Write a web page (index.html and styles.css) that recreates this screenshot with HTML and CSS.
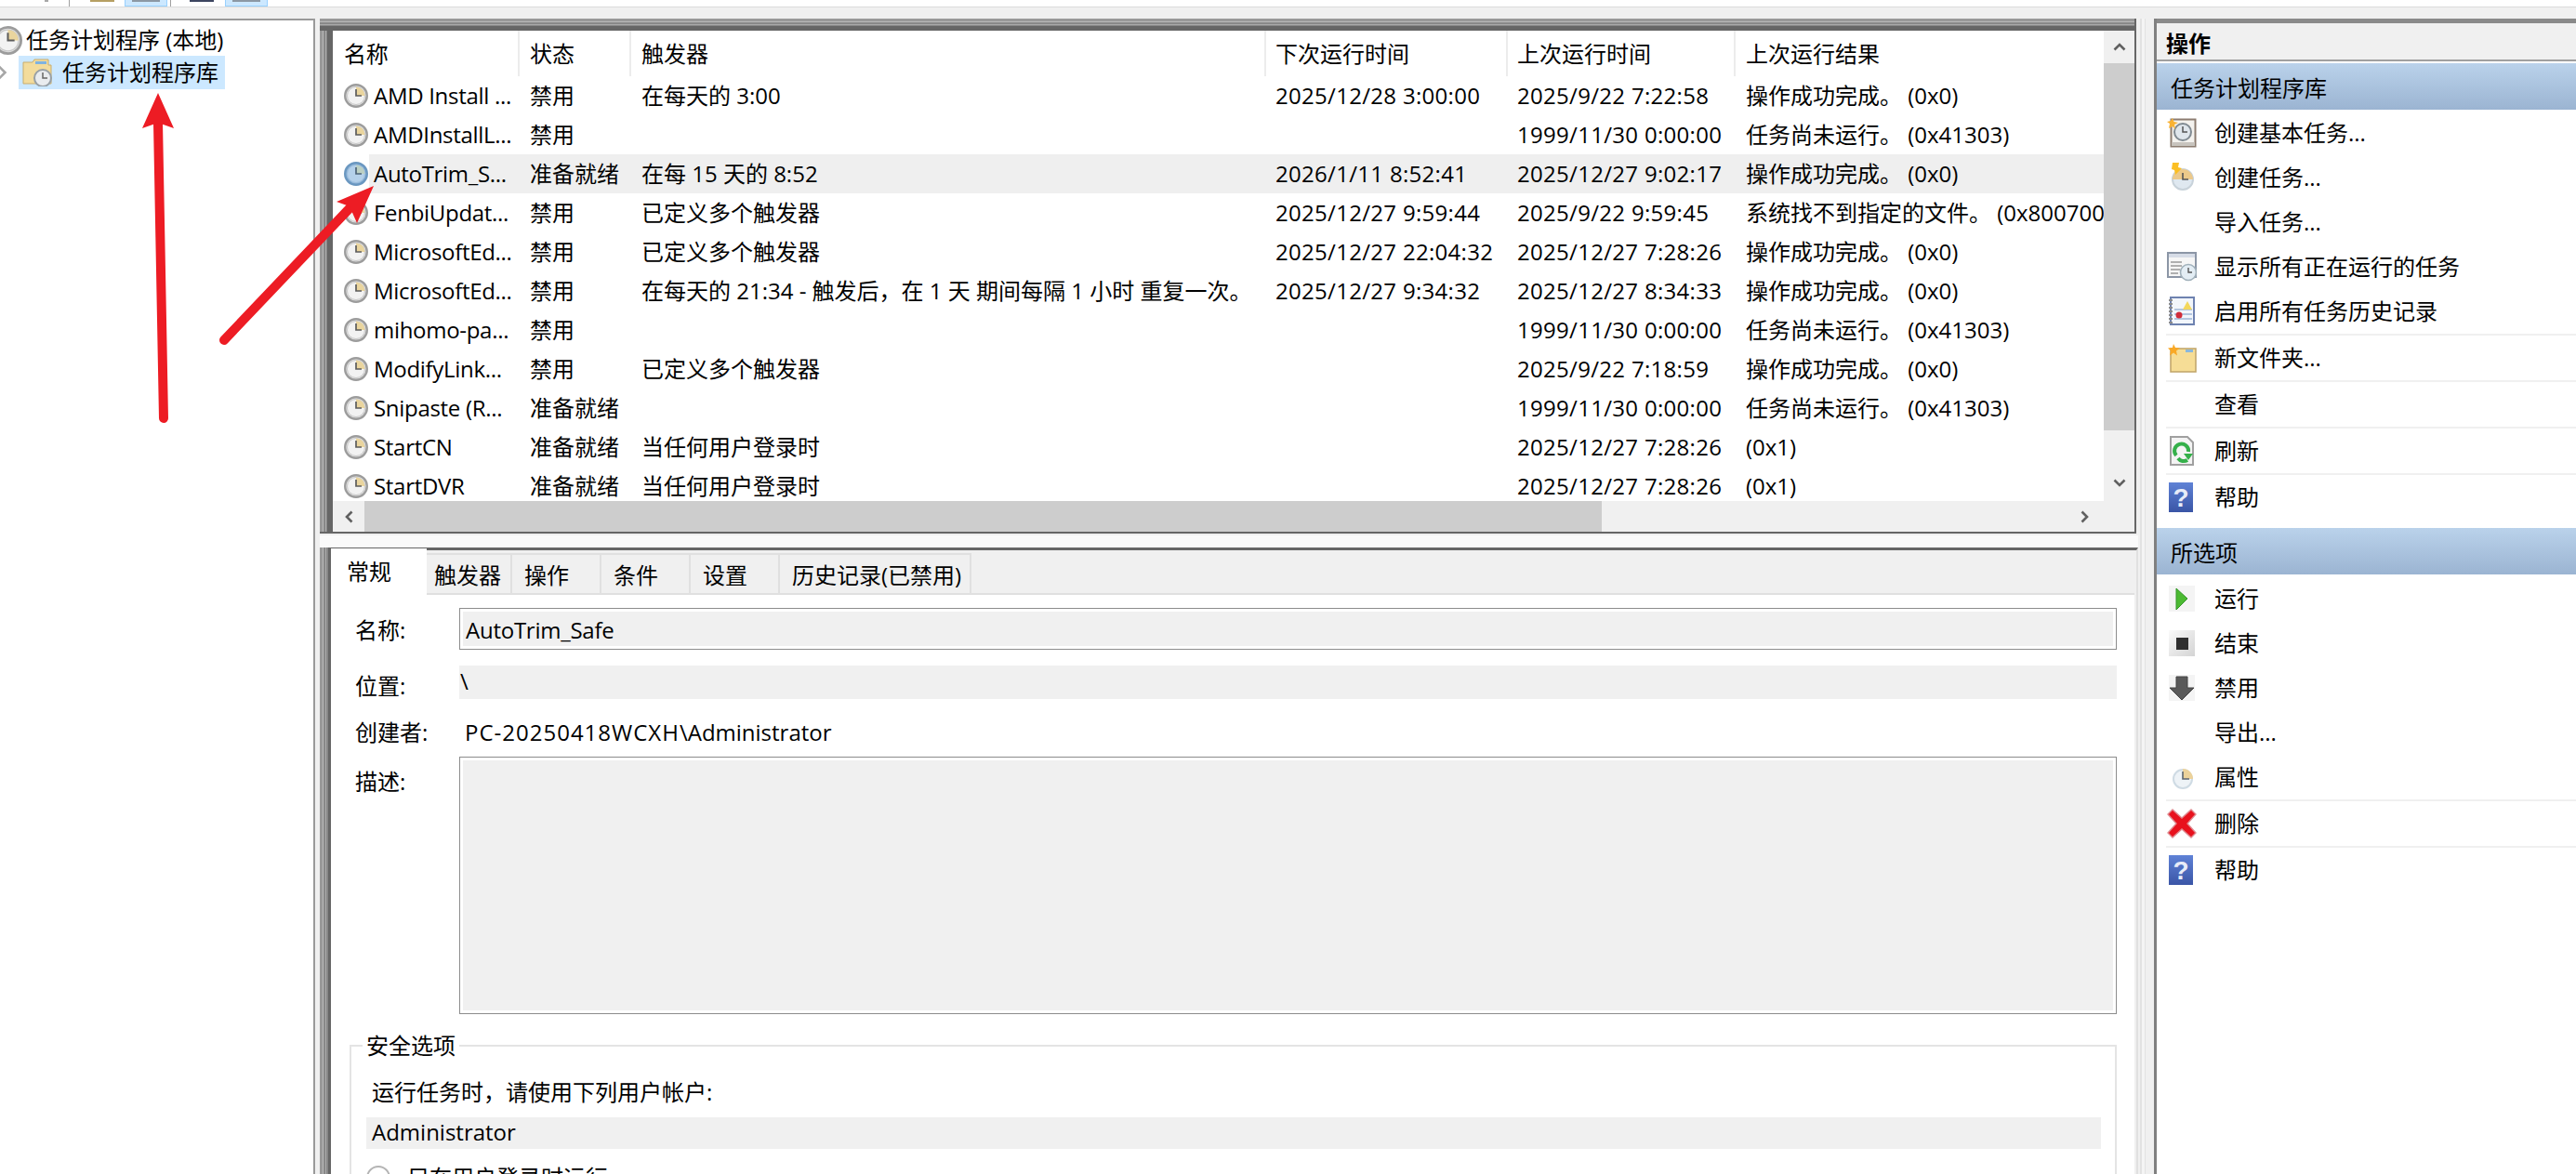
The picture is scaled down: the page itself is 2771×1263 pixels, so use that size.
FILE: index.html
```html
<!DOCTYPE html>
<html lang="zh-CN">
<head>
<meta charset="utf-8">
<title>任务计划程序</title>
<link rel="stylesheet" href="styles.css">
</head>
<body>
<svg class="defs" width="0" height="0" aria-hidden="true">
  <symbol id="clock" viewBox="0 0 26 26">
    <circle cx="13" cy="13" r="11.8" fill="#e4e4e4" stroke="#9c9c9c" stroke-width="2.4"/>
    <circle cx="13" cy="13" r="9.5" fill="#f2f2f2" stroke="#c8c8c8"/>
    <path d="M13 13V3.5A9.5 9.5 0 0 1 22.5 13Z" fill="#ead59e"/>
    <path d="M13 6v7h6" fill="none" stroke="#5c5c5c" stroke-width="1.7"/>
  </symbol>
  <symbol id="clock-blue" viewBox="0 0 26 26">
    <circle cx="13" cy="13" r="11.8" fill="#8fb4d8" stroke="#6a97c0" stroke-width="2.4"/>
    <circle cx="13" cy="13" r="9.5" fill="#b4d0ea" stroke="#9cbddc"/>
    <path d="M13 13V3.5A9.5 9.5 0 0 1 22.5 13Z" fill="#bcd0c4"/>
    <path d="M13 6v7h6" fill="none" stroke="#4d6478" stroke-width="1.7"/>
  </symbol>
  <linearGradient id="helpbg" x1="0" y1="0" x2="0" y2="1"><stop offset="0" stop-color="#5f82d6"/><stop offset="1" stop-color="#3a55a6"/></linearGradient>
</svg>

<div class="toolbar">
  <span class="tb-bit tb-grey"></span>
  <span class="tb-sep tb-sep-a"></span>
  <span class="tb-bit tb-gold"></span>
  <span class="tb-btn tb-btn-a"><i></i></span>
  <span class="tb-sep tb-sep-b"></span>
  <span class="tb-bit tb-dark"></span>
  <span class="tb-btn tb-btn-b"><i></i></span>
</div>

<div class="layout">
  <aside class="tree">
    <div class="tree-row">
      <svg class="tree-clock" viewBox="0 0 26 26"><use href="#clock"/></svg>
      <span>任务计划程序 (本地)</span>
    </div>
    <div class="tree-row tree-row-sub">
      <svg class="tree-chev" viewBox="0 0 10 16"><path d="M1 1.5 7.5 8 1 14.5" fill="none" stroke="#a6a6a6" stroke-width="2.6"/></svg>
      <div class="tree-sel">
        <svg class="tree-folder" viewBox="0 0 32 30">
          <path d="M1 4h10l2-3h15v6h3v20H1Z" fill="#f3dc9c" stroke="#c9ad6c"/>
          <rect x="14" y="3" width="12" height="3" fill="#7fb3e0"/>
          <circle cx="22" cy="21" r="9" fill="#e9ecef" stroke="#98a0a6" stroke-width="2"/>
          <path d="M22 15v6h5" fill="none" stroke="#666" stroke-width="1.5"/>
        </svg>
        <span>任务计划程序库</span>
      </div>
    </div>
  </aside>

  <main class="center">
    <section class="frame">
      <div class="list-top">
        <div class="table">
          <div class="row head">
            <div class="c1">名称</div><div class="c2">状态</div><div class="c3">触发器</div><div class="c4">下次运行时间</div><div class="c5">上次运行时间</div><div class="c6">上次运行结果</div>
          </div>
          <div class="row">
            <div class="c1"><svg class="clk"><use href="#clock"/></svg>AMD Install ...</div><div class="c2">禁用</div><div class="c3">在每天的 3:00</div><div class="c4 num">2025/12/28 3:00:00</div><div class="c5 num">2025/9/22 7:22:58</div><div class="c6">操作成功完成。 (0x0)</div>
          </div>
          <div class="row">
            <div class="c1"><svg class="clk"><use href="#clock"/></svg>AMDInstallL...</div><div class="c2">禁用</div><div class="c3"></div><div class="c4 num"></div><div class="c5 num">1999/11/30 0:00:00</div><div class="c6">任务尚未运行。 (0x41303)</div>
          </div>
          <div class="row sel">
            <div class="c1"><svg class="clk"><use href="#clock-blue"/></svg>AutoTrim_S...</div><div class="c2">准备就绪</div><div class="c3">在每 15 天的 8:52</div><div class="c4 num">2026/1/11 8:52:41</div><div class="c5 num">2025/12/27 9:02:17</div><div class="c6">操作成功完成。 (0x0)</div>
          </div>
          <div class="row">
            <div class="c1"><svg class="clk"><use href="#clock"/></svg>FenbiUpdat...</div><div class="c2">禁用</div><div class="c3">已定义多个触发器</div><div class="c4 num">2025/12/27 9:59:44</div><div class="c5 num">2025/9/22 9:59:45</div><div class="c6">系统找不到指定的文件。 (0x80070002)</div>
          </div>
          <div class="row">
            <div class="c1"><svg class="clk"><use href="#clock"/></svg>MicrosoftEd...</div><div class="c2">禁用</div><div class="c3">已定义多个触发器</div><div class="c4 num">2025/12/27 22:04:32</div><div class="c5 num">2025/12/27 7:28:26</div><div class="c6">操作成功完成。 (0x0)</div>
          </div>
          <div class="row">
            <div class="c1"><svg class="clk"><use href="#clock"/></svg>MicrosoftEd...</div><div class="c2">禁用</div><div class="c3">在每天的 21:34 - 触发后，在 1 天 期间每隔 1 小时 重复一次。</div><div class="c4 num">2025/12/27 9:34:32</div><div class="c5 num">2025/12/27 8:34:33</div><div class="c6">操作成功完成。 (0x0)</div>
          </div>
          <div class="row">
            <div class="c1"><svg class="clk"><use href="#clock"/></svg>mihomo-pa...</div><div class="c2">禁用</div><div class="c3"></div><div class="c4 num"></div><div class="c5 num">1999/11/30 0:00:00</div><div class="c6">任务尚未运行。 (0x41303)</div>
          </div>
          <div class="row">
            <div class="c1"><svg class="clk"><use href="#clock"/></svg>ModifyLink...</div><div class="c2">禁用</div><div class="c3">已定义多个触发器</div><div class="c4 num"></div><div class="c5 num">2025/9/22 7:18:59</div><div class="c6">操作成功完成。 (0x0)</div>
          </div>
          <div class="row">
            <div class="c1"><svg class="clk"><use href="#clock"/></svg>Snipaste (R...</div><div class="c2">准备就绪</div><div class="c3"></div><div class="c4 num"></div><div class="c5 num">1999/11/30 0:00:00</div><div class="c6">任务尚未运行。 (0x41303)</div>
          </div>
          <div class="row">
            <div class="c1"><svg class="clk"><use href="#clock"/></svg>StartCN</div><div class="c2">准备就绪</div><div class="c3">当任何用户登录时</div><div class="c4 num"></div><div class="c5 num">2025/12/27 7:28:26</div><div class="c6">(0x1)</div>
          </div>
          <div class="row">
            <div class="c1"><svg class="clk"><use href="#clock"/></svg>StartDVR</div><div class="c2">准备就绪</div><div class="c3">当任何用户登录时</div><div class="c4 num"></div><div class="c5 num">2025/12/27 7:28:26</div><div class="c6">(0x1)</div>
          </div>
        </div>
        <div class="vscroll">
          <div class="sb-btn"><svg class="chev-v" viewBox="0 0 14 9"><path d="M1.5 7.5 7 2l5.5 5.5" /></svg></div>
          <div class="sb-vthumb"></div>
          <div class="sb-rest"><svg class="chev-v" viewBox="0 0 14 9"><path d="M1.5 1.5 7 7l5.5-5.5" /></svg></div>
        </div>
      </div>
      <div class="hscroll">
        <div class="sb-hbtn"><svg class="chev-h" viewBox="0 0 9 14"><path d="M7.5 1.5 2 7l5.5 5.5" /></svg></div>
        <div class="sb-hthumb"></div>
        <div class="sb-hrest"><svg class="chev-h" viewBox="0 0 9 14"><path d="M1.5 1.5 7 7l-5.5 5.5" /></svg></div>
      </div>
    </section>

    <div class="split-h"></div>

    <section class="lower">
      <div class="lower-stripes"></div>
      <div class="lower-main">
        <nav class="tabs">
          <div class="tab active t-a">常规</div>
          <div class="tab t-b">触发器</div>
          <div class="tab t-c">操作</div>
          <div class="tab t-c">条件</div>
          <div class="tab t-c">设置</div>
          <div class="tab t-d">历史记录(已禁用)</div>
        </nav>
        <div class="tab-body">
          <div class="f-row f-name">
            <label class="f-label">名称:</label>
            <div class="f-box"><span>AutoTrim_Safe</span></div>
          </div>
          <div class="f-row f-loc">
            <label class="f-label">位置:</label>
            <div class="f-flat">\</div>
          </div>
          <div class="f-row f-author">
            <label class="f-label">创建者:</label>
            <div class="f-plain"><span class="host">PC-20250418WCXH</span>\Administrator</div>
          </div>
          <div class="f-row f-desc">
            <label class="f-label">描述:</label>
            <div class="f-box"></div>
          </div>
          <fieldset class="group">
            <legend>安全选项</legend>
            <p class="g-line">运行任务时，请使用下列用户帐户:</p>
            <div class="g-user">Administrator</div>
            <div class="g-radio"><span class="radio"></span>只在用户登录时运行</div>
          </fieldset>
        </div>
      </div>
    </section>
  </main>

  <div class="split-v"></div>

  <aside class="actions">
    <div class="act-head">操作</div>
    <div class="act-title">任务计划程序库</div>
    <div class="act-rows">
      <div class="act-row">
        <svg class="ico" viewBox="0 0 32 32">
          <rect x="4.5" y="1.5" width="26" height="29" fill="#f4f2ee" stroke="#8c7c70" stroke-width="2"/>
          <rect x="5" y="26" width="25" height="4" fill="#c8c4be"/>
          <circle cx="17" cy="15" r="9" fill="#dfe6ec" stroke="#808a92" stroke-width="2"/>
          <path d="M17 9v6h5" fill="none" stroke="#555" stroke-width="1.5"/>
          <path d="M6 0l1.5 4L12 5 8 7l1 5-3-3-4 2 1-5-3-2 4-1Z" fill="#f9b233"/>
        </svg>
        <span>创建基本任务...</span>
      </div>
      <div class="act-row">
        <svg class="ico" viewBox="0 0 32 32">
          <circle cx="17" cy="18" r="11" fill="#dfe8f0" stroke="#c8d2da" stroke-width="2"/>
          <path d="M17 18V7a11 11 0 0 1 11 11Z" fill="#ecc98a"/>
          <path d="M6 18a11 11 0 0 1 11-11v11Z" fill="#ecc98a"/>
          <path d="M17 11v7h6" fill="none" stroke="#555" stroke-width="1.6"/>
          <path d="M6 0h7l-1 5 4 1-7 7-1-5-3-1Z" fill="#fbbf24"/>
        </svg>
        <span>创建任务...</span>
      </div>
      <div class="act-row">
        <span class="ico"></span>
        <span>导入任务...</span>
      </div>
      <div class="act-row">
        <svg class="ico" viewBox="0 0 32 32">
          <rect x="1" y="1" width="30" height="26" fill="#f6f6f6" stroke="#8c96a6" stroke-width="2"/>
          <rect x="2" y="2" width="28" height="4" fill="#d6dce6"/>
          <path d="M4 11h12M4 15h12M4 19h10M4 23h8" stroke="#b0b0b0" stroke-width="2"/>
          <circle cx="23" cy="22" r="8.5" fill="#e3edf4" stroke="#a0b0ba" stroke-width="1.6"/>
          <path d="M23 17v5h4" fill="none" stroke="#555" stroke-width="1.4"/>
        </svg>
        <span>显示所有正在运行的任务</span>
      </div>
      <div class="act-row">
        <svg class="ico" viewBox="0 0 32 32">
          <rect x="4" y="1" width="25" height="29" fill="#f2f6fb" stroke="#6e82b0" stroke-width="2"/>
          <path d="M2 4h4M2 8h4M2 12h4M2 16h4M2 20h4M2 24h4M2 28h4" stroke="#8c8c8c" stroke-width="2"/>
          <path d="M8 14h19M8 19h19M8 24h19" stroke="#9fb7d8" stroke-width="1.6"/>
          <path d="M22 5l5 9H17Z" fill="#f3d75c"/>
          <circle cx="13" cy="20" r="3.5" fill="#d12d3a"/>
        </svg>
        <span>启用所有任务历史记录</span>
      </div>
      <div class="act-sep"></div>
      <div class="act-row">
        <svg class="ico" viewBox="0 0 32 32">
          <path d="M4 6h27v25H4Z" fill="#f6dd96" stroke="#c0a468" stroke-width="1.5"/>
          <rect x="20" y="7" width="8" height="3" fill="#8ab8dc"/>
          <path d="M7 1l2 4 5 .5-4 3 1 5-4-3-4 3 1-5-3-3 5-.5Z" fill="#f9a825"/>
        </svg>
        <span>新文件夹...</span>
      </div>
      <div class="act-sep"></div>
      <div class="act-row">
        <span class="ico"></span>
        <span>查看</span>
      </div>
      <div class="act-sep"></div>
      <div class="act-row">
        <svg class="ico" viewBox="0 0 32 32">
          <path d="M4 1h18l6 6v24H4Z" fill="#f4f4f4" stroke="#a0a0a0" stroke-width="2"/>
          <path d="M10 21a7.5 7.5 0 1 1 13-4" fill="none" stroke="#35b04a" stroke-width="4"/>
          <path d="M22 26a7.5 7.5 0 0 1-10 -2" fill="none" stroke="#35b04a" stroke-width="4"/>
          <path d="M18 19h10l-5 7Z" fill="#35b04a"/>
        </svg>
        <span>刷新</span>
      </div>
      <div class="act-sep"></div>
      <div class="act-row">
        <svg class="ico ico-help" viewBox="0 0 26 32">
          <rect width="26" height="32" fill="url(#helpbg)"/>
          <text class="help-mark" x="13" y="26">?</text>
        </svg>
        <span>帮助</span>
      </div>
    </div>

    <div class="act-title act-title-2">所选项</div>
    <div class="act-rows-2">
      <div class="act-row">
        <svg class="ico" viewBox="0 0 32 32">
          <rect x="2" y="2" width="28" height="28" fill="#f4f4f4"/>
          <path d="M10 5l12 11-12 12Z" fill="#4cba32" stroke="#35962a"/>
        </svg>
        <span>运行</span>
      </div>
      <div class="act-row">
        <svg class="ico" viewBox="0 0 32 32">
          <defs><linearGradient id="stopbg" x1="0" y1="0" x2="1" y2="1"><stop offset="0" stop-color="#fafafa"/><stop offset="1" stop-color="#d4d4d4"/></linearGradient></defs>
          <rect x="2" y="2" width="28" height="28" fill="url(#stopbg)"/>
          <rect x="10" y="10" width="13" height="13" fill="#2e2e2e"/>
        </svg>
        <span>结束</span>
      </div>
      <div class="act-row">
        <svg class="ico" viewBox="0 0 32 32">
          <rect x="2" y="2" width="28" height="28" fill="#f4f4f4"/>
          <path d="M10 4h12v12h7L16 29 3 16h7Z" fill="#5a5a5a" stroke="#444"/>
        </svg>
        <span>禁用</span>
      </div>
      <div class="act-row">
        <span class="ico"></span>
        <span>导出...</span>
      </div>
      <div class="act-row">
        <svg class="ico" viewBox="0 0 32 32">
          <circle cx="17" cy="18" r="10" fill="#eef3f7" stroke="#cfdbe4" stroke-width="2"/>
          <path d="M17 18V7a11 11 0 0 1 11 11Z" fill="#ecd29a"/>
          <path d="M17 10v8h7" fill="none" stroke="#5c6670" stroke-width="1.6"/>
        </svg>
        <span>属性</span>
      </div>
      <div class="act-sep"></div>
      <div class="act-row">
        <svg class="ico" viewBox="0 0 32 32">
          <path d="M1 6l5-5 10 9 10-9 5 5-9 10 9 10-5 5-10-9-10 9-5-5 9-10Z" fill="#e8111d" stroke="#e08a90" stroke-width="1.4"/>
        </svg>
        <span>删除</span>
      </div>
      <div class="act-sep"></div>
      <div class="act-row">
        <svg class="ico ico-help" viewBox="0 0 26 32">
          <rect width="26" height="32" fill="url(#helpbg)"/>
          <text class="help-mark" x="13" y="26">?</text>
        </svg>
        <span>帮助</span>
      </div>
    </div>
  </aside>
</div>

<svg class="annot" viewBox="0 0 2771 1263" aria-hidden="true">
  <path d="M176 450 170 132" stroke="#ed1c24" stroke-width="10" stroke-linecap="round" fill="none"/>
  <path d="M170 100 187 138 170 132 153 138Z" fill="#ed1c24"/>
  <path d="M241 366 378 222" stroke="#ed1c24" stroke-width="10" stroke-linecap="round" fill="none"/>
  <path d="M402 200 362 217 376 222 384 240Z" fill="#ed1c24"/>
</svg>
</body>
</html>
```

FILE: styles.css
```css
* { box-sizing: border-box; }
html, body { margin: 0; height: 1263px; overflow: hidden; }
body {
  position: relative;
  background: #f0f0f0;
  color: #000;
  font: 24px/32px "Open Sans", "Noto Sans CJK SC", sans-serif;
}
.defs { position: absolute; }

/* top toolbar sliver */
.toolbar { display: flex; height: 8px; background: #fff; border-bottom: 1px solid #dcdcdc; overflow: hidden; }
.tb-bit { height: 2px; }
.tb-grey { width: 4px; margin-left: 48px; background: #a8a8a8; }
.tb-sep { width: 1px; height: 7px; background: #a0a0a0; }
.tb-sep-a { margin-left: 22px; }
.tb-gold { width: 26px; margin-left: 22px; background: #b69f63; }
.tb-btn { width: 46px; height: 7px; background: #cce8ff; border: 1px solid #99d1ff; border-top: 0; padding: 0 7px; }
.tb-btn i { display: block; height: 2px; background: #8c98a4; }
.tb-btn-a { margin-left: 11px; }
.tb-sep-b { margin-left: 3px; }
.tb-dark { width: 26px; margin-left: 20px; background: #3c4560; }
.tb-btn-b { margin-left: 12px; }

.layout { display: flex; height: 1255px; padding-top: 12px; }

/* tree */
.tree { width: 339px; margin-right: 5px; flex: none; background: #fff; border-top: 2px solid #9a9a9a; border-right: 2px solid #9a9a9a; padding-top: 4px; overflow: hidden; }
.tree-row { display: flex; align-items: center; height: 34px; }
.tree-clock { width: 31px; height: 31px; margin-left: -7px; margin-right: 4px; flex: none; }
.tree-row-sub { height: 36px; }
.tree-chev { width: 10px; height: 16px; margin-left: -2px; margin-right: 12px; flex: none; }
.tree-sel { display: flex; align-items: center; width: 222px; height: 36px; padding-left: 4px; background: #cce8ff; }
.tree-folder { width: 32px; height: 30px; margin-right: 11px; flex: none; }

/* centre */
.center { width: 1956px; flex: none; display: flex; flex-direction: column; }
.frame {
  width: 1954px; height: 554px; flex: none;
  padding: 13px 0 0 14px;
  border-right: 2px solid #666;
  border-bottom: 2px solid #666;
  background:
    linear-gradient(to bottom, #999 0 3px, #bbb 3px 4px, #888 4px 6px, #aaa 6px 7px, #888 7px 8px, #666 8px 13px) top left / 100% 13px no-repeat,
    linear-gradient(to right, #999 0 3px, #bbb 3px 4px, #888 4px 6px, #aaa 6px 7px, #888 7px 8px, #666 8px 14px) top left / 14px 100% no-repeat,
    #fff;
}
.list-top { display: flex; height: 506px; }
.table { width: 1905px; height: 506px; flex: none; overflow: hidden; background: #fff; }
.row { display: flex; height: 42px; align-items: center; white-space: nowrap; }
.row > div { height: 100%; display: flex; align-items: center; overflow: hidden; flex: none; padding-left: 13px; }
.row.sel { background: linear-gradient(90deg, #fff 39px, #efefef 39px); }
.row.head { height: 49px; }
.row.head > div { height: 49px; box-shadow: 2px 0 0 #ececec; }
.row.head .c6 { box-shadow: none; }
.row > .c1 { width: 199px; padding-left: 12px; letter-spacing: -.3px; }
.c2 { width: 120px; }
.c3 { width: 683px; }
.row > .c4 { width: 260px; padding-left: 12px; }
.row > .c5 { width: 245px; padding-left: 12px; }
.c6 { width: 398px; }
.num { letter-spacing: .3px; }
.clk { width: 26px; height: 26px; margin-right: 6px; flex: none; }

.vscroll { width: 33px; flex: none; display: flex; flex-direction: column; background: #f0f0f0; }
.sb-btn { height: 35px; display: flex; align-items: center; justify-content: center; }
.sb-vthumb { height: 395px; background: #cdcdcd; }
.sb-rest { flex: 1; display: flex; align-items: flex-end; justify-content: center; padding-bottom: 15px; }
.chev-v { width: 14px; height: 9px; }
.chev-h { width: 9px; height: 14px; }
.chev-v path, .chev-h path { fill: none; stroke: #606060; stroke-width: 2.6; }

.hscroll { display: flex; height: 33px; background: #f0f0f0; }
.sb-hbtn { width: 34px; display: flex; align-items: center; justify-content: center; flex: none; }
.sb-hthumb { width: 1331px; background: #cdcdcd; flex: none; }
.sb-hrest { flex: 1; display: flex; align-items: center; justify-content: flex-end; padding-right: 49px; }

.split-h { height: 15px; flex: none; background: #fafafa; border-top: 2px solid #f0f0f0; }

/* lower panel */
.lower { flex: 1; display: flex; min-height: 0; overflow: hidden; }
.lower-stripes { width: 9px; flex: none; background: linear-gradient(to right, #999 0 3px, #bbb 3px 4px, #888 4px 6px, #aaa 6px 7px, #888 7px 9px); }
.lower-main { flex: 1; min-width: 0; border-top: 3px solid #666; border-left: 3px solid #666; border-right: 2px solid #e0e0e0; background: #f0f0f0; padding-right: 2px; }
.tabs { display: flex; align-items: flex-end; height: 48px; border-bottom: 2px solid #e0e0e0; }
.tab { height: 43px; padding: 3px 0 0 13px; line-height: 38px; background: #f0f0f0; border-top: 2px solid #e0e0e0; border-right: 2px solid #e0e0e0; flex: none; white-space: nowrap; }
.tab.active { height: 50px; padding: 3px 0 0 17px; line-height: 44px; background: #fff; border: 0; margin-bottom: -2px; position: relative; }
.t-a { width: 103px; }
.tab.t-b { width: 92px; padding-left: 8px; }
.t-c { width: 96px; }
.t-d { width: 206px; }

.tab-body { background: #fff; height: 640px; padding: 14px 19px 0 26px; overflow: hidden; }
.f-row { display: flex; }
.f-label { width: 112px; flex: none; }
.f-box { flex: 1; border: 1px solid #8c8c8c; background: #f0f0f0; box-shadow: inset 0 0 0 3px #fff; }
.f-name { height: 45px; align-items: stretch; }
.f-name .f-label { line-height: 47px; }
.f-name .f-box { padding-left: 6px; line-height: 45px; letter-spacing: -.25px; }
.f-loc { height: 36px; margin-top: 17px; }
.f-loc .f-label { line-height: 44px; }
.f-flat { flex: 1; background: #f0f0f0; padding-left: 1px; line-height: 34px; }
.f-author { height: 36px; margin-top: 17px; line-height: 38px; }
.f-plain { padding-left: 6px; }
.host { letter-spacing: 1px; }
.f-desc { height: 277px; margin-top: 9px; }
.f-desc .f-label { line-height: 53px; }

.group { margin: 18px 0 0 -6px; padding: 0 15px 0 16px; border: 2px solid #e4e4e4; min-width: 0; }
.group legend { padding: 0 4px; margin-left: -4px; line-height: 32px; }
.g-line { margin: 18px 0 0; padding-left: 6px; }
.g-user { margin-top: 11px; height: 34px; line-height: 32px; padding-left: 6px; background: #f0f0f0; }
.g-radio { display: flex; margin-top: 18px; height: 26px; line-height: 26px; }
.radio { width: 26px; height: 26px; border: 2px solid #b4b4b4; border-radius: 50%; background: #fff; margin-right: 18px; flex: none; }

/* vertical splitter */
.split-v { width: 17px; flex: none; background: linear-gradient(to right, #f0f0f0 0 2px, #e2e2e2 2px 4px, #f4f4f4 4px 7px, #e2e2e2 7px 8px, #f0f0f0 8px); }

/* actions panel */
.actions { flex: 1; min-width: 0; background: #fff; border-left: 3px solid #808080; overflow: hidden; }
.act-head { height: 46px; margin-bottom: 2px; padding: 4px 0 0 10px; background: #f0f0f0; border-top: 5px solid #8a8a8a; border-bottom: 2px solid #a0a0a0; font-weight: 700; line-height: 36px; }
.act-title { height: 50px; padding-left: 15px; line-height: 54px; background: linear-gradient(#bad2eb, #9bb4d2); }
.act-rows { padding-top: 1px; }
.act-rows-2 { padding-top: 2px; }
.act-title-2 { margin-top: 9px; }
.act-row { display: flex; align-items: center; height: 48px; padding-left: 11px; }
.ico { width: 32px; height: 32px; margin-right: 19px; flex: none; display: block; }
.ico-help { width: 26px; margin-left: 2px; margin-right: 23px; }
.help-mark { font: 700 28px "Liberation Sans", sans-serif; fill: #e8ecf8; text-anchor: middle; }
.act-sep { height: 2px; margin-left: 10px; background: #f0f0f0; }

/* red annotations */
.annot { position: absolute; left: 0; top: 0; width: 2771px; height: 1263px; pointer-events: none; }
```
